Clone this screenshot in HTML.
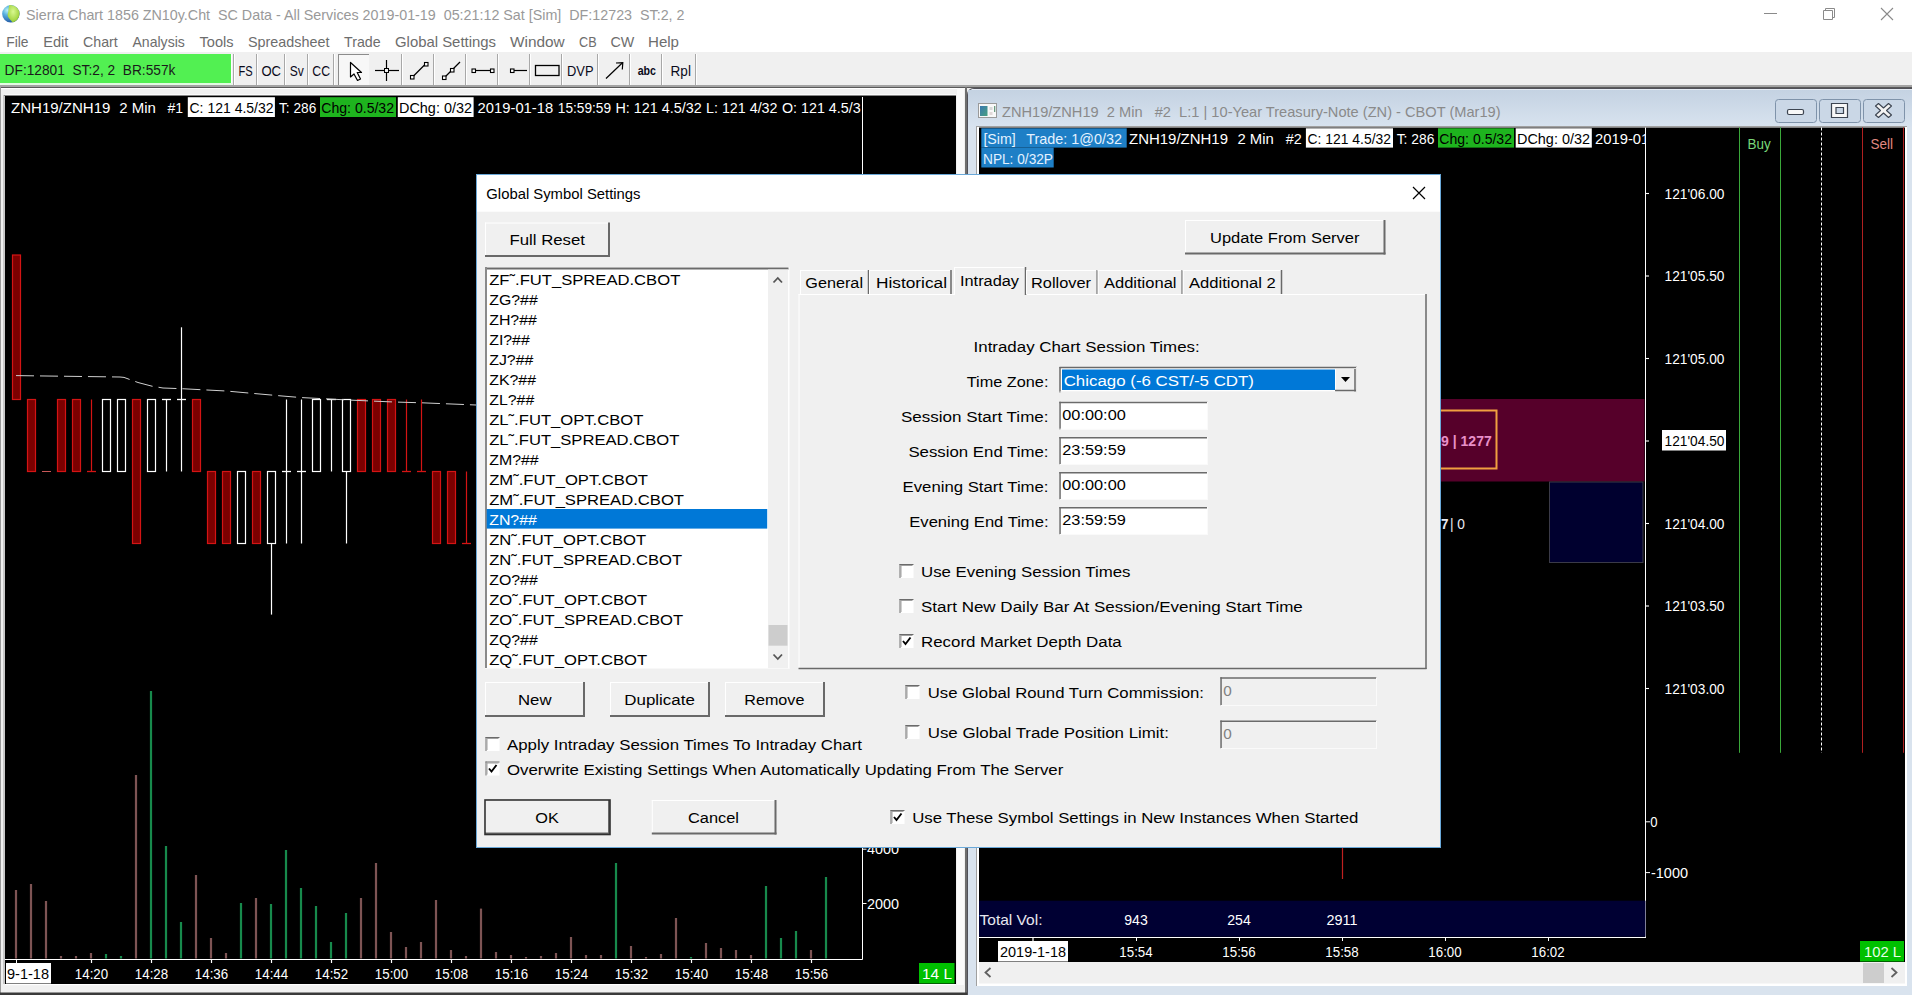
<!DOCTYPE html>
<html><head><meta charset="utf-8"><title>Sierra Chart</title>
<style>html,body{margin:0;padding:0;width:1912px;height:995px;overflow:hidden;background:#f0f0f0}
svg{display:block;font-family:"Liberation Sans",sans-serif} text{white-space:pre}</style></head>
<body><svg width="1912" height="995" viewBox="0 0 1912 995">
<rect x="0" y="0" width="1912" height="995" fill="#f0f0f0" />
<rect x="0" y="0" width="1912" height="52" fill="#ffffff" />
<defs><radialGradient id="gl" cx="0.4" cy="0.35" r="0.7"><stop offset="0" stop-color="#d8f070"/><stop offset="0.45" stop-color="#78b830"/><stop offset="1" stop-color="#1a5a9a"/></radialGradient><linearGradient id="tb" x1="0" y1="0" x2="0" y2="1"><stop offset="0" stop-color="#c4d2e2"/><stop offset="1" stop-color="#d8e3ef"/></linearGradient></defs>
<defs><radialGradient id="gb" cx="0.3" cy="0.3" r="0.8"><stop offset="0" stop-color="#b8f0f4"/><stop offset="0.35" stop-color="#58b0e0"/><stop offset="1" stop-color="#1a4a9a"/></radialGradient><radialGradient id="gg" cx="0.45" cy="0.35" r="0.75"><stop offset="0" stop-color="#d8f890"/><stop offset="0.6" stop-color="#a8d848"/><stop offset="1" stop-color="#5a9a20"/></radialGradient><clipPath id="gc"><circle cx="10.85" cy="13.8" r="8.7"/></clipPath></defs>
<circle cx="10.85" cy="13.8" r="8.7" fill="url(#gb)"/>
<g clip-path="url(#gc)"><path d="M9 5 Q16 4.5 20 10 L20 24 L13 24 Q12 21 10 19.5 Q7.5 17.5 7.5 14.5 Q8.5 12 8.5 9.5 Q9 7 9 5 Z" fill="url(#gg)"/></g>
<text x="26" y="20" font-size="14.5" fill="#999999" textLength="658.5" lengthAdjust="spacingAndGlyphs" >Sierra Chart 1856 ZN10y.Cht  SC Data - All Services 2019-01-19  05:21:12 Sat [Sim]  DF:12723  ST:2, 2</text>
<line x1="1764" y1="13.5" x2="1777" y2="13.5" stroke="#8a8a8a" stroke-width="1" />
<path d="M1823.5 10.5 h9 v9 h-9 z M1825.5 10.5 v-2 h9 v9 h-2" fill="none" stroke="#8a8a8a" stroke-width="1"/>
<path d="M1881 8 L1893 20 M1893 8 L1881 20" stroke="#8a8a8a" stroke-width="1.1"/>
<text x="6.2" y="46.7" font-size="15" fill="#6d6d6d" textLength="22.3" lengthAdjust="spacingAndGlyphs" >File</text>
<text x="43.2" y="46.7" font-size="15" fill="#6d6d6d" textLength="25.2" lengthAdjust="spacingAndGlyphs" >Edit</text>
<text x="83.1" y="46.7" font-size="15" fill="#6d6d6d" textLength="34.7" lengthAdjust="spacingAndGlyphs" >Chart</text>
<text x="132.5" y="46.7" font-size="15" fill="#6d6d6d" textLength="52.3" lengthAdjust="spacingAndGlyphs" >Analysis</text>
<text x="199.5" y="46.7" font-size="15" fill="#6d6d6d" textLength="34.0" lengthAdjust="spacingAndGlyphs" >Tools</text>
<text x="248" y="46.7" font-size="15" fill="#6d6d6d" textLength="81.4" lengthAdjust="spacingAndGlyphs" >Spreadsheet</text>
<text x="344" y="46.7" font-size="15" fill="#6d6d6d" textLength="36.6" lengthAdjust="spacingAndGlyphs" >Trade</text>
<text x="395" y="46.7" font-size="15" fill="#6d6d6d" textLength="101" lengthAdjust="spacingAndGlyphs" >Global Settings</text>
<text x="510" y="46.7" font-size="15" fill="#6d6d6d" textLength="54.7" lengthAdjust="spacingAndGlyphs" >Window</text>
<text x="579" y="46.7" font-size="15" fill="#6d6d6d" textLength="17.6" lengthAdjust="spacingAndGlyphs" >CB</text>
<text x="610.5" y="46.7" font-size="15" fill="#6d6d6d" textLength="23.8" lengthAdjust="spacingAndGlyphs" >CW</text>
<text x="648" y="46.7" font-size="15" fill="#6d6d6d" textLength="31" lengthAdjust="spacingAndGlyphs" >Help</text>
<rect x="0" y="54" width="231" height="29" fill="#52f052" />
<line x1="231.5" y1="54" x2="231.5" y2="84" stroke="#ffffff" stroke-width="1" />
<rect x="0" y="83" width="232" height="1" fill="#ffffff" />
<text x="4.6" y="75.3" font-size="15" fill="#1a1a1a" textLength="170.8" lengthAdjust="spacingAndGlyphs" >DF:12801  ST:2, 2  BR:557k</text>
<line x1="233.5" y1="54" x2="233.5" y2="85" stroke="#a8a8a8" stroke-width="1" />
<line x1="234.5" y1="54" x2="234.5" y2="85" stroke="#ffffff" stroke-width="1" />
<line x1="256.5" y1="54" x2="256.5" y2="85" stroke="#a8a8a8" stroke-width="1" />
<line x1="257.5" y1="54" x2="257.5" y2="85" stroke="#ffffff" stroke-width="1" />
<line x1="284.5" y1="54" x2="284.5" y2="85" stroke="#a8a8a8" stroke-width="1" />
<line x1="285.5" y1="54" x2="285.5" y2="85" stroke="#ffffff" stroke-width="1" />
<line x1="307.5" y1="54" x2="307.5" y2="85" stroke="#a8a8a8" stroke-width="1" />
<line x1="308.5" y1="54" x2="308.5" y2="85" stroke="#ffffff" stroke-width="1" />
<line x1="333.5" y1="54" x2="333.5" y2="85" stroke="#a8a8a8" stroke-width="1" />
<line x1="334.5" y1="54" x2="334.5" y2="85" stroke="#ffffff" stroke-width="1" />
<line x1="401.5" y1="54" x2="401.5" y2="85" stroke="#a8a8a8" stroke-width="1" />
<line x1="402.5" y1="54" x2="402.5" y2="85" stroke="#ffffff" stroke-width="1" />
<line x1="433.5" y1="54" x2="433.5" y2="85" stroke="#a8a8a8" stroke-width="1" />
<line x1="434.5" y1="54" x2="434.5" y2="85" stroke="#ffffff" stroke-width="1" />
<line x1="465.5" y1="54" x2="465.5" y2="85" stroke="#a8a8a8" stroke-width="1" />
<line x1="466.5" y1="54" x2="466.5" y2="85" stroke="#ffffff" stroke-width="1" />
<line x1="497.5" y1="54" x2="497.5" y2="85" stroke="#a8a8a8" stroke-width="1" />
<line x1="498.5" y1="54" x2="498.5" y2="85" stroke="#ffffff" stroke-width="1" />
<line x1="529.5" y1="54" x2="529.5" y2="85" stroke="#a8a8a8" stroke-width="1" />
<line x1="530.5" y1="54" x2="530.5" y2="85" stroke="#ffffff" stroke-width="1" />
<line x1="561.5" y1="54" x2="561.5" y2="85" stroke="#a8a8a8" stroke-width="1" />
<line x1="562.5" y1="54" x2="562.5" y2="85" stroke="#ffffff" stroke-width="1" />
<line x1="597.5" y1="54" x2="597.5" y2="85" stroke="#a8a8a8" stroke-width="1" />
<line x1="598.5" y1="54" x2="598.5" y2="85" stroke="#ffffff" stroke-width="1" />
<line x1="629.5" y1="54" x2="629.5" y2="85" stroke="#a8a8a8" stroke-width="1" />
<line x1="630.5" y1="54" x2="630.5" y2="85" stroke="#ffffff" stroke-width="1" />
<line x1="661.5" y1="54" x2="661.5" y2="85" stroke="#a8a8a8" stroke-width="1" />
<line x1="662.5" y1="54" x2="662.5" y2="85" stroke="#ffffff" stroke-width="1" />
<line x1="695.5" y1="54" x2="695.5" y2="85" stroke="#a8a8a8" stroke-width="1" />
<line x1="696.5" y1="54" x2="696.5" y2="85" stroke="#ffffff" stroke-width="1" />
<rect x="338" y="54" width="31" height="32" fill="#f7f7f7" />
<line x1="338.5" y1="54" x2="338.5" y2="86" stroke="#8c8c8c" stroke-width="1" />
<line x1="338" y1="54.5" x2="369" y2="54.5" stroke="#8c8c8c" stroke-width="1" />
<text x="238.5" y="75.7" font-size="15" fill="#0a0a1a" textLength="14.2" lengthAdjust="spacingAndGlyphs" >FS</text>
<text x="261.4" y="75.7" font-size="15" fill="#0a0a1a" textLength="19.6" lengthAdjust="spacingAndGlyphs" >OC</text>
<text x="289.7" y="75.7" font-size="15" fill="#0a0a1a" textLength="14.1" lengthAdjust="spacingAndGlyphs" >Sv</text>
<text x="312.3" y="75.7" font-size="15" fill="#0a0a1a" textLength="17.7" lengthAdjust="spacingAndGlyphs" >CC</text>
<path d="M350.5 62.5 L350.5 77 L354 74 L357.5 80.5 L360.5 79 L357.2 72.5 L361.5 72.5 Z" fill="#fff" stroke="#000" stroke-width="1.2" stroke-linejoin="round"/>
<line x1="375" y1="70.5" x2="384" y2="70.5" stroke="#000" stroke-width="1.2" />
<line x1="389" y1="70.5" x2="399" y2="70.5" stroke="#000" stroke-width="1.2" />
<line x1="386.5" y1="60" x2="386.5" y2="68" stroke="#000" stroke-width="1.2" />
<line x1="386.5" y1="73" x2="386.5" y2="81" stroke="#000" stroke-width="1.2" />
<rect x="384.5" y="68.5" width="4" height="4" fill="none" stroke="#000" stroke-width="1" />
<line x1="413" y1="76.5" x2="425" y2="64.5" stroke="#000" stroke-width="1.2" />
<rect x="410.5" y="75.5" width="3.5" height="3.5" fill="#fff" stroke="#000" stroke-width="1.1" />
<rect x="424.5" y="62.5" width="3.5" height="3.5" fill="#fff" stroke="#000" stroke-width="1.1" />
<line x1="445" y1="77" x2="460" y2="62" stroke="#000" stroke-width="1.2" />
<rect x="442.5" y="76" width="3.5" height="3.5" fill="#fff" stroke="#000" stroke-width="1.1" />
<rect x="450.5" y="68.5" width="3.5" height="3.5" fill="#fff" stroke="#000" stroke-width="1.1" />
<line x1="475" y1="70.5" x2="491" y2="70.5" stroke="#000" stroke-width="1.2" />
<rect x="472" y="69" width="3.5" height="3.5" fill="#fff" stroke="#000" stroke-width="1.1" />
<rect x="490.5" y="69" width="3.5" height="3.5" fill="#fff" stroke="#000" stroke-width="1.1" />
<line x1="514" y1="70.5" x2="527" y2="70.5" stroke="#000" stroke-width="1.2" />
<rect x="510.5" y="69" width="3.5" height="3.5" fill="#fff" stroke="#000" stroke-width="1.1" />
<rect x="535.5" y="65.5" width="23.5" height="10" fill="none" stroke="#000" stroke-width="1.3" />
<text x="567" y="75.7" font-size="15" fill="#0a0a1a" textLength="26.5" lengthAdjust="spacingAndGlyphs" >DVP</text>
<line x1="606" y1="78.5" x2="622.5" y2="62.8" stroke="#000" stroke-width="1.2" />
<path d="M616 63 L622.8 62.6 L622.3 69.5" fill="none" stroke="#000" stroke-width="1.2"/>
<text x="637.7" y="75.3" font-size="13" fill="#0a0a1a" textLength="18.3" lengthAdjust="spacingAndGlyphs" font-weight="bold" >abc</text>
<text x="670.6" y="75.7" font-size="15" fill="#0a0a1a" textLength="20.3" lengthAdjust="spacingAndGlyphs" >Rpl</text>
<rect x="0" y="83" width="232" height="2" fill="#e4fbe4" />
<rect x="0" y="85" width="1912" height="2" fill="#a4a4a4" />
<rect x="0" y="87" width="1912" height="908" fill="#f0f0f0" />
<rect x="0" y="87" width="1912" height="1" fill="#5a5a5a" />
<rect x="0" y="88" width="966" height="1" fill="#ffffff" />
<line x1="0.5" y1="87" x2="0.5" y2="995" stroke="#9a9a9a" stroke-width="1" />
<line x1="4" y1="95" x2="4" y2="984" stroke="#a0a0a0" stroke-width="1" />
<rect x="5" y="94" width="951" height="1" fill="#fafafa" />
<rect x="4" y="95" width="952" height="1" fill="#858585" />
<rect x="957" y="88" width="7" height="897" fill="#fafafa" />
<rect x="5" y="96" width="951" height="888" fill="#000000" />
<rect x="965" y="87" width="2" height="908" fill="#6e6e6e" />
<rect x="0" y="992.5" width="1912" height="2.5" fill="#3a3a3a" />
<text x="11" y="112.7" font-size="15" fill="#fff" textLength="99.4" lengthAdjust="spacingAndGlyphs" >ZNH19/ZNH19</text>
<text x="119.2" y="112.7" font-size="15" fill="#fff" textLength="36.7" lengthAdjust="spacingAndGlyphs" >2 Min</text>
<text x="167.4" y="112.7" font-size="15" fill="#fff" textLength="15.6" lengthAdjust="spacingAndGlyphs" >#1</text>
<rect x="187.8" y="97.2" width="87.1" height="19.8" fill="#ffffff" />
<text x="189.5" y="112.7" font-size="15" fill="#000" textLength="84.1" lengthAdjust="spacingAndGlyphs" >C: 121 4.5/32</text>
<text x="279" y="112.7" font-size="15" fill="#fff" textLength="37.3" lengthAdjust="spacingAndGlyphs" >T: 286</text>
<rect x="320" y="97.2" width="76" height="19.8" fill="#1eb41e" />
<text x="321.3" y="112.7" font-size="15" fill="#000" textLength="72.7" lengthAdjust="spacingAndGlyphs" >Chg: 0.5/32</text>
<rect x="397.8" y="97.2" width="75.8" height="19.8" fill="#ffffff" />
<text x="399" y="112.7" font-size="15" fill="#000" textLength="73" lengthAdjust="spacingAndGlyphs" >DChg: 0/32</text>
<clipPath id="lclip"><rect x="5" y="96" width="856" height="30"/></clipPath>
<g clip-path="url(#lclip)">
<text x="477.6" y="112.7" font-size="15" fill="#fff" textLength="75.6" lengthAdjust="spacingAndGlyphs" >2019-01-18</text>
<text x="557.8" y="112.7" font-size="15" fill="#fff" textLength="53.2" lengthAdjust="spacingAndGlyphs" >15:59:59</text>
<text x="615.5" y="112.7" font-size="15" fill="#fff" textLength="86.2" lengthAdjust="spacingAndGlyphs" >H: 121 4.5/32</text>
<text x="706" y="112.7" font-size="15" fill="#fff" textLength="71.5" lengthAdjust="spacingAndGlyphs" >L: 121 4/32</text>
<text x="782" y="112.7" font-size="15" fill="#fff" textLength="86.6" lengthAdjust="spacingAndGlyphs" >O: 121 4.5/32</text>
</g>
<line x1="862.5" y1="97" x2="862.5" y2="959.5" stroke="#ffffff" stroke-width="1" />
<rect x="12.5" y="255" width="8" height="144.5" fill="#7c0000" stroke="#d41414" stroke-width="1.2" />
<rect x="27.5" y="399.5" width="8" height="72.0" fill="#7c0000" stroke="#d41414" stroke-width="1.2" />
<line x1="42.0" y1="471.5" x2="51.0" y2="471.5" stroke="#c85858" stroke-width="1" />
<rect x="57.5" y="399.5" width="8" height="72.0" fill="#7c0000" stroke="#d41414" stroke-width="1.2" />
<rect x="72.5" y="399.5" width="8" height="72.0" fill="#7c0000" stroke="#d41414" stroke-width="1.2" />
<line x1="91.5" y1="399.5" x2="91.5" y2="471.5" stroke="#d41414" stroke-width="1.2" />
<line x1="87.0" y1="471.5" x2="96.0" y2="471.5" stroke="#d41414" stroke-width="1.3" />
<rect x="102.5" y="399.5" width="8" height="72.0" fill="#000" stroke="#fff" stroke-width="1.2" />
<rect x="117.5" y="399.5" width="8" height="72.0" fill="#000" stroke="#fff" stroke-width="1.2" />
<rect x="132.5" y="399.5" width="8" height="144.0" fill="#7c0000" stroke="#d41414" stroke-width="1.2" />
<rect x="147.5" y="399.5" width="8" height="72.0" fill="#000" stroke="#fff" stroke-width="1.2" />
<line x1="166.5" y1="399.5" x2="166.5" y2="471.5" stroke="#fff" stroke-width="1.2" />
<line x1="162.0" y1="399.5" x2="171.0" y2="399.5" stroke="#fff" stroke-width="1.3" />
<line x1="181.5" y1="327.3" x2="181.5" y2="471.5" stroke="#fff" stroke-width="1.2" />
<line x1="177.0" y1="399.5" x2="186.0" y2="399.5" stroke="#fff" stroke-width="1.3" />
<rect x="192.5" y="399.5" width="8" height="72.0" fill="#7c0000" stroke="#d41414" stroke-width="1.2" />
<rect x="207.5" y="471.5" width="8" height="72.0" fill="#7c0000" stroke="#d41414" stroke-width="1.2" />
<rect x="222.5" y="471.5" width="8" height="72.0" fill="#7c0000" stroke="#d41414" stroke-width="1.2" />
<rect x="237.5" y="471.5" width="8" height="72.0" fill="#000" stroke="#fff" stroke-width="1.2" />
<rect x="252.5" y="471.5" width="8" height="72.0" fill="#7c0000" stroke="#d41414" stroke-width="1.2" />
<line x1="271.5" y1="543.5" x2="271.5" y2="614.6" stroke="#fff" stroke-width="1.2" />
<rect x="267.5" y="471.5" width="8" height="72.0" fill="#000" stroke="#fff" stroke-width="1.2" />
<line x1="286.5" y1="399.5" x2="286.5" y2="543.5" stroke="#fff" stroke-width="1.2" />
<line x1="282.0" y1="471.5" x2="291.0" y2="471.5" stroke="#fff" stroke-width="1.3" />
<line x1="301.5" y1="399.5" x2="301.5" y2="543.5" stroke="#fff" stroke-width="1.2" />
<line x1="297.0" y1="471.5" x2="306.0" y2="471.5" stroke="#fff" stroke-width="1.3" />
<rect x="312.5" y="399.5" width="8" height="72.0" fill="#000" stroke="#fff" stroke-width="1.2" />
<line x1="331.5" y1="399.5" x2="331.5" y2="471.5" stroke="#fff" stroke-width="1.2" />
<line x1="327.0" y1="399.5" x2="336.0" y2="399.5" stroke="#fff" stroke-width="1.3" />
<line x1="346.5" y1="471.5" x2="346.5" y2="543.5" stroke="#fff" stroke-width="1.2" />
<rect x="342.5" y="399.5" width="8" height="72.0" fill="#000" stroke="#fff" stroke-width="1.2" />
<rect x="357.5" y="399.5" width="8" height="72.0" fill="#7c0000" stroke="#d41414" stroke-width="1.2" />
<rect x="372.5" y="399.5" width="8" height="72.0" fill="#7c0000" stroke="#d41414" stroke-width="1.2" />
<rect x="387.5" y="399.5" width="8" height="72.0" fill="#7c0000" stroke="#d41414" stroke-width="1.2" />
<line x1="406.5" y1="399.5" x2="406.5" y2="471.5" stroke="#d41414" stroke-width="1.2" />
<line x1="402.0" y1="471.5" x2="411.0" y2="471.5" stroke="#d41414" stroke-width="1.3" />
<line x1="421.5" y1="399.5" x2="421.5" y2="471.5" stroke="#d41414" stroke-width="1.2" />
<line x1="417.0" y1="471.5" x2="426.0" y2="471.5" stroke="#d41414" stroke-width="1.3" />
<rect x="432.5" y="471.5" width="8" height="72.0" fill="#7c0000" stroke="#d41414" stroke-width="1.2" />
<rect x="447.5" y="471.5" width="8" height="72.0" fill="#7c0000" stroke="#d41414" stroke-width="1.2" />
<line x1="466.5" y1="471.5" x2="466.5" y2="543.5" stroke="#d41414" stroke-width="1.2" />
<line x1="462.0" y1="543.5" x2="471.0" y2="543.5" stroke="#d41414" stroke-width="1.3" />
<polyline points="16,375.6 120,377 124,377.4 138,382.5 152,386.2 163,388 184,388.8 226,391 281,395.9 300,397.5 352,400.2 394,402 422,402.8 476,405" fill="none" stroke="#d0d0d0" stroke-width="1" stroke-dasharray="18 6"/>
<rect x="14.9" y="890" width="2.2" height="68.5" fill="#7e5454" />
<rect x="29.9" y="884" width="2.2" height="74.5" fill="#7e5454" />
<rect x="44.9" y="901" width="2.2" height="57.5" fill="#7e5454" />
<rect x="59.9" y="956" width="2.2" height="2.5" fill="#7e5454" />
<rect x="74.9" y="956" width="2.2" height="2.5" fill="#7e5454" />
<rect x="89.9" y="953" width="2.2" height="5.5" fill="#7e5454" />
<rect x="104.9" y="954" width="2.2" height="4.5" fill="#178a4c" />
<rect x="119.9" y="956" width="2.2" height="2.5" fill="#178a4c" />
<rect x="134.9" y="775" width="2.2" height="183.5" fill="#7e5454" />
<rect x="149.9" y="691" width="2.2" height="267.5" fill="#178a4c" />
<rect x="164.9" y="846" width="2.2" height="112.5" fill="#178a4c" />
<rect x="179.9" y="922" width="2.2" height="36.5" fill="#178a4c" />
<rect x="194.9" y="875" width="2.2" height="83.5" fill="#7e5454" />
<rect x="209.9" y="938" width="2.2" height="20.5" fill="#7e5454" />
<rect x="224.9" y="953" width="2.2" height="5.5" fill="#7e5454" />
<rect x="239.9" y="903" width="2.2" height="55.5" fill="#178a4c" />
<rect x="254.9" y="898" width="2.2" height="60.5" fill="#7e5454" />
<rect x="269.9" y="904" width="2.2" height="54.5" fill="#178a4c" />
<rect x="284.9" y="850" width="2.2" height="108.5" fill="#178a4c" />
<rect x="299.9" y="888" width="2.2" height="70.5" fill="#178a4c" />
<rect x="314.9" y="906" width="2.2" height="52.5" fill="#178a4c" />
<rect x="329.9" y="942" width="2.2" height="16.5" fill="#178a4c" />
<rect x="344.9" y="913" width="2.2" height="45.5" fill="#178a4c" />
<rect x="359.9" y="898" width="2.2" height="60.5" fill="#7e5454" />
<rect x="374.9" y="863" width="2.2" height="95.5" fill="#7e5454" />
<rect x="389.9" y="932" width="2.2" height="26.5" fill="#7e5454" />
<rect x="404.9" y="947" width="2.2" height="11.5" fill="#7e5454" />
<rect x="419.9" y="942" width="2.2" height="16.5" fill="#7e5454" />
<rect x="434.9" y="900" width="2.2" height="58.5" fill="#7e5454" />
<rect x="449.9" y="950" width="2.2" height="8.5" fill="#7e5454" />
<rect x="464.9" y="956" width="2.2" height="2.5" fill="#7e5454" />
<rect x="479.9" y="908.6" width="2.2" height="49.89999999999998" fill="#7e5454" />
<rect x="494.9" y="952" width="2.2" height="6.5" fill="#7e5454" />
<rect x="509.9" y="955" width="2.2" height="3.5" fill="#7e5454" />
<rect x="524.9" y="957" width="2.2" height="1.5" fill="#7e5454" />
<rect x="539.9" y="956" width="2.2" height="2.5" fill="#7e5454" />
<rect x="554.9" y="953" width="2.2" height="5.5" fill="#7e5454" />
<rect x="569.9" y="937" width="2.2" height="21.5" fill="#7e5454" />
<rect x="584.9" y="955" width="2.2" height="3.5" fill="#7e5454" />
<rect x="599.9" y="955" width="2.2" height="3.5" fill="#7e5454" />
<rect x="614.9" y="863" width="2.2" height="95.5" fill="#178a4c" />
<rect x="629.9" y="946" width="2.2" height="12.5" fill="#7e5454" />
<rect x="644.9" y="957" width="2.2" height="1.5" fill="#7e5454" />
<rect x="659.9" y="954" width="2.2" height="4.5" fill="#7e5454" />
<rect x="674.9" y="918" width="2.2" height="40.5" fill="#7e5454" />
<rect x="689.9" y="957" width="2.2" height="1.5" fill="#178a4c" />
<rect x="704.9" y="943" width="2.2" height="15.5" fill="#7e5454" />
<rect x="719.9" y="948" width="2.2" height="10.5" fill="#7e5454" />
<rect x="734.9" y="950" width="2.2" height="8.5" fill="#7e5454" />
<rect x="749.9" y="955" width="2.2" height="3.5" fill="#7e5454" />
<rect x="764.9" y="886" width="2.2" height="72.5" fill="#178a4c" />
<rect x="779.9" y="938" width="2.2" height="20.5" fill="#178a4c" />
<rect x="794.9" y="931" width="2.2" height="27.5" fill="#178a4c" />
<rect x="809.9" y="950" width="2.2" height="8.5" fill="#7e5454" />
<rect x="824.9" y="877" width="2.2" height="81.5" fill="#178a4c" />
<line x1="5" y1="959.5" x2="862.5" y2="959.5" stroke="#ffffff" stroke-width="1.2" />
<line x1="16.5" y1="959" x2="16.5" y2="963" stroke="#fff" stroke-width="1" />
<line x1="91.5" y1="959" x2="91.5" y2="963" stroke="#fff" stroke-width="1.2" />
<text x="91.5" y="978.9" font-size="15" fill="#fff" textLength="33.3" lengthAdjust="spacingAndGlyphs" text-anchor="middle" >14:20</text>
<line x1="151.5" y1="959" x2="151.5" y2="963" stroke="#fff" stroke-width="1.2" />
<text x="151.5" y="978.9" font-size="15" fill="#fff" textLength="33.3" lengthAdjust="spacingAndGlyphs" text-anchor="middle" >14:28</text>
<line x1="211.5" y1="959" x2="211.5" y2="963" stroke="#fff" stroke-width="1.2" />
<text x="211.5" y="978.9" font-size="15" fill="#fff" textLength="33.3" lengthAdjust="spacingAndGlyphs" text-anchor="middle" >14:36</text>
<line x1="271.5" y1="959" x2="271.5" y2="963" stroke="#fff" stroke-width="1.2" />
<text x="271.5" y="978.9" font-size="15" fill="#fff" textLength="33.3" lengthAdjust="spacingAndGlyphs" text-anchor="middle" >14:44</text>
<line x1="331.5" y1="959" x2="331.5" y2="963" stroke="#fff" stroke-width="1.2" />
<text x="331.5" y="978.9" font-size="15" fill="#fff" textLength="33.3" lengthAdjust="spacingAndGlyphs" text-anchor="middle" >14:52</text>
<line x1="391.5" y1="959" x2="391.5" y2="963" stroke="#fff" stroke-width="1.2" />
<text x="391.5" y="978.9" font-size="15" fill="#fff" textLength="33.3" lengthAdjust="spacingAndGlyphs" text-anchor="middle" >15:00</text>
<line x1="451.5" y1="959" x2="451.5" y2="963" stroke="#fff" stroke-width="1.2" />
<text x="451.5" y="978.9" font-size="15" fill="#fff" textLength="33.3" lengthAdjust="spacingAndGlyphs" text-anchor="middle" >15:08</text>
<line x1="511.5" y1="959" x2="511.5" y2="963" stroke="#fff" stroke-width="1.2" />
<text x="511.5" y="978.9" font-size="15" fill="#fff" textLength="33.3" lengthAdjust="spacingAndGlyphs" text-anchor="middle" >15:16</text>
<line x1="571.5" y1="959" x2="571.5" y2="963" stroke="#fff" stroke-width="1.2" />
<text x="571.5" y="978.9" font-size="15" fill="#fff" textLength="33.3" lengthAdjust="spacingAndGlyphs" text-anchor="middle" >15:24</text>
<line x1="631.5" y1="959" x2="631.5" y2="963" stroke="#fff" stroke-width="1.2" />
<text x="631.5" y="978.9" font-size="15" fill="#fff" textLength="33.3" lengthAdjust="spacingAndGlyphs" text-anchor="middle" >15:32</text>
<line x1="691.5" y1="959" x2="691.5" y2="963" stroke="#fff" stroke-width="1.2" />
<text x="691.5" y="978.9" font-size="15" fill="#fff" textLength="33.3" lengthAdjust="spacingAndGlyphs" text-anchor="middle" >15:40</text>
<line x1="751.5" y1="959" x2="751.5" y2="963" stroke="#fff" stroke-width="1.2" />
<text x="751.5" y="978.9" font-size="15" fill="#fff" textLength="33.3" lengthAdjust="spacingAndGlyphs" text-anchor="middle" >15:48</text>
<line x1="811.5" y1="959" x2="811.5" y2="963" stroke="#fff" stroke-width="1.2" />
<text x="811.5" y="978.9" font-size="15" fill="#fff" textLength="33.3" lengthAdjust="spacingAndGlyphs" text-anchor="middle" >15:56</text>
<rect x="6" y="963" width="45" height="20.5" fill="#ffffff" />
<text x="7" y="978.9" font-size="15" fill="#000" textLength="42" lengthAdjust="spacingAndGlyphs" >9-1-18</text>
<line x1="862.5" y1="849.2" x2="866.5" y2="849.2" stroke="#fff" stroke-width="1" />
<line x1="862.5" y1="903.5" x2="866.5" y2="903.5" stroke="#fff" stroke-width="1" />
<text x="867" y="854.2" font-size="15" fill="#fff" textLength="32" lengthAdjust="spacingAndGlyphs" >4000</text>
<text x="867" y="909.2" font-size="15" fill="#fff" textLength="32" lengthAdjust="spacingAndGlyphs" >2000</text>
<rect x="919" y="963" width="35.5" height="20.5" fill="#00c000" />
<text x="922" y="978.9" font-size="15" fill="#fff" textLength="30" lengthAdjust="spacingAndGlyphs" >14 L</text>
<rect x="5" y="984" width="951" height="1.2" fill="#ffffff" />
<path d="M967.5 995 L967.5 95 Q967.5 88.5 974 88.5 L1912 88.5 L1912 995 Z" fill="#d9e3ee"/>
<path d="M967.5 995 L967.5 95 Q967.5 88.5 974 88.5 L1912 88.5" fill="none" stroke="#505058" stroke-width="1"/>
<rect x="968" y="90" width="944" height="37" fill="url(#tb)" />
<rect x="972" y="89" width="940" height="1" fill="#e4ebf3" />
<rect x="978.5" y="103.5" width="18" height="14" fill="#f8f8f8" stroke="#9a9a9a" stroke-width="1" />
<defs><linearGradient id="ic" x1="0" y1="0" x2="1" y2="1"><stop offset="0" stop-color="#3a78b0"/><stop offset="1" stop-color="#48a080"/></linearGradient></defs>
<rect x="980" y="106" width="7.5" height="10" fill="url(#ic)"/>
<rect x="994" y="106" width="1.3" height="6" fill="#6a9a80"/><rect x="989.5" y="107" width="3" height="3" fill="#d8d8d8"/><rect x="989.5" y="112" width="3" height="3" fill="#e0d8d8"/>
<text x="1002" y="117" font-size="15" fill="#8a8a8a" textLength="498.6" lengthAdjust="spacingAndGlyphs" >ZNH19/ZNH19  2 Min   #2  L:1 | 10-Year Treasury-Note (ZN) - CBOT (Mar19)</text>
<rect x="1775.5" y="99.5" width="41" height="23" fill="#cad7e6" stroke="#7f93aa" stroke-width="1" rx="3"/>
<rect x="1819.5" y="99.5" width="41" height="23" fill="#cad7e6" stroke="#7f93aa" stroke-width="1" rx="3"/>
<rect x="1863.5" y="99.5" width="41" height="23" fill="#cad7e6" stroke="#7f93aa" stroke-width="1" rx="3"/>
<rect x="1787.5" y="109.5" width="16" height="5" rx="1.5" fill="#f8f8f8" stroke="#3c4450" stroke-width="1.2"/>
<path d="M1831.5 103.5 h16 v14 h-16 z M1836 107.5 v6 h7.5 v-6 z" fill="#f8f8f8" fill-rule="evenodd" stroke="#3c4450" stroke-width="1.2"/>
<path d="M1875.5 106 L1878.5 103.5 L1883.5 108 L1888.5 103.5 L1891.5 106 L1886.5 110.5 L1891.5 115 L1888.5 117.5 L1883.5 113 L1878.5 117.5 L1875.5 115 L1880.5 110.5 Z" fill="#f4f4f4" stroke="#3c4450" stroke-width="1.1" stroke-linejoin="round"/>
<rect x="976" y="126" width="931" height="860" fill="#ffffff" />
<rect x="976" y="126" width="931" height="1" fill="#a0a0a0" />
<rect x="976" y="126" width="1" height="860" fill="#a0a0a0" />
<rect x="979" y="127.5" width="926" height="834.5" fill="#000000" />
<rect x="979" y="962" width="926" height="21.5" fill="#f0f0f0" />
<path d="M990.5 968 L985.5 972.5 L990.5 977" fill="none" stroke="#606060" stroke-width="1.8"/>
<rect x="1863" y="963" width="21" height="20" fill="#cdcdcd" />
<path d="M1891.5 968 L1896.5 972.5 L1891.5 977" fill="none" stroke="#606060" stroke-width="1.8"/>
<rect x="981.3" y="128.3" width="145.4" height="19.3" fill="#1e7fc6" />
<rect x="981.3" y="147.6" width="72.4" height="19.9" fill="#1e7fc6" />
<text x="983.4" y="143.8" font-size="15" fill="#e4f2ff" textLength="32.4" lengthAdjust="spacingAndGlyphs" >[Sim]</text>
<text x="1026.3" y="143.8" font-size="15" fill="#e4f2ff" textLength="95.7" lengthAdjust="spacingAndGlyphs" >Trade: 1@0/32</text>
<text x="983" y="163.8" font-size="15" fill="#e4f2ff" textLength="70" lengthAdjust="spacingAndGlyphs" >NPL: 0/32P</text>
<text x="1129" y="143.8" font-size="15" fill="#fff" textLength="99" lengthAdjust="spacingAndGlyphs" >ZNH19/ZNH19</text>
<text x="1237.4" y="143.8" font-size="15" fill="#fff" textLength="36.4" lengthAdjust="spacingAndGlyphs" >2 Min</text>
<text x="1285.8" y="143.8" font-size="15" fill="#fff" textLength="16" lengthAdjust="spacingAndGlyphs" >#2</text>
<rect x="1305.9" y="128.3" width="87.1" height="19.3" fill="#ffffff" />
<text x="1307.6" y="143.8" font-size="15" fill="#000" textLength="83.4" lengthAdjust="spacingAndGlyphs" >C: 121 4.5/32</text>
<text x="1396.7" y="143.8" font-size="15" fill="#fff" textLength="37.7" lengthAdjust="spacingAndGlyphs" >T: 286</text>
<rect x="1438" y="128.3" width="76" height="19.3" fill="#1eb41e" />
<text x="1439.3" y="143.8" font-size="15" fill="#000" textLength="72.7" lengthAdjust="spacingAndGlyphs" >Chg: 0.5/32</text>
<rect x="1515.7" y="128.3" width="76.1" height="19.3" fill="#ffffff" />
<text x="1517" y="143.8" font-size="15" fill="#000" textLength="73" lengthAdjust="spacingAndGlyphs" >DChg: 0/32</text>
<clipPath id="rclip"><rect x="979" y="127" width="666" height="40"/></clipPath>
<g clip-path="url(#rclip)">
<text x="1595" y="143.8" font-size="15" fill="#fff" textLength="75.6" lengthAdjust="spacingAndGlyphs" >2019-01-18</text>
</g>
<line x1="1645.5" y1="127.5" x2="1645.5" y2="937" stroke="#ffffff" stroke-width="1" />
<line x1="1739.5" y1="127.5" x2="1739.5" y2="752.8" stroke="#3aa83a" stroke-width="1" />
<line x1="1780.5" y1="127.5" x2="1780.5" y2="752.8" stroke="#3aa83a" stroke-width="1" />
<line x1="1821.5" y1="127.5" x2="1821.5" y2="752.8" stroke="#ffffff" stroke-width="1" stroke-dasharray="3 2"/>
<line x1="1862.5" y1="127.5" x2="1862.5" y2="752.8" stroke="#b02020" stroke-width="1" />
<line x1="1903.5" y1="127.5" x2="1903.5" y2="752.8" stroke="#b02020" stroke-width="1" />
<text x="1747.5" y="148.7" font-size="15" fill="#78d878" textLength="23.2" lengthAdjust="spacingAndGlyphs" >Buy</text>
<text x="1870.5" y="148.7" font-size="15" fill="#e08880" textLength="22.5" lengthAdjust="spacingAndGlyphs" >Sell</text>
<line x1="1645.5" y1="193.5" x2="1649" y2="193.5" stroke="#fff" stroke-width="1.1" />
<text x="1664.6" y="198.8" font-size="15" fill="#fff" textLength="59.9" lengthAdjust="spacingAndGlyphs" >121&#x27;06.00</text>
<line x1="1645.5" y1="276.0" x2="1649" y2="276.0" stroke="#fff" stroke-width="1.1" />
<text x="1664.6" y="281.3" font-size="15" fill="#fff" textLength="59.9" lengthAdjust="spacingAndGlyphs" >121&#x27;05.50</text>
<line x1="1645.5" y1="358.5" x2="1649" y2="358.5" stroke="#fff" stroke-width="1.1" />
<text x="1664.6" y="363.8" font-size="15" fill="#fff" textLength="59.9" lengthAdjust="spacingAndGlyphs" >121&#x27;05.00</text>
<line x1="1645.5" y1="441.0" x2="1649" y2="441.0" stroke="#fff" stroke-width="1.1" />
<rect x="1662" y="430" width="64" height="20.5" fill="#ffffff" />
<text x="1664.6" y="446.3" font-size="15" fill="#000" textLength="59.9" lengthAdjust="spacingAndGlyphs" >121&#x27;04.50</text>
<line x1="1645.5" y1="523.5" x2="1649" y2="523.5" stroke="#fff" stroke-width="1.1" />
<text x="1664.6" y="528.8" font-size="15" fill="#fff" textLength="59.9" lengthAdjust="spacingAndGlyphs" >121&#x27;04.00</text>
<line x1="1645.5" y1="606.0" x2="1649" y2="606.0" stroke="#fff" stroke-width="1.1" />
<text x="1664.6" y="611.3" font-size="15" fill="#fff" textLength="59.9" lengthAdjust="spacingAndGlyphs" >121&#x27;03.50</text>
<line x1="1645.5" y1="688.5" x2="1649" y2="688.5" stroke="#fff" stroke-width="1.1" />
<text x="1664.6" y="693.8" font-size="15" fill="#fff" textLength="59.9" lengthAdjust="spacingAndGlyphs" >121&#x27;03.00</text>
<rect x="1440" y="399" width="204.5" height="82.5" fill="#56002a" />
<rect x="1549.5" y="482" width="93.5" height="80.5" fill="#00002f" stroke="#3a3a48" stroke-width="1" />
<rect x="1430" y="410.5" width="66.5" height="58" fill="none" stroke="#f0a040" stroke-width="2" />
<text x="1441" y="446" font-size="14.5" fill="#e890c8" textLength="50.8" lengthAdjust="spacingAndGlyphs" font-weight="bold" >9 | 1277</text>
<text x="1441" y="528.7" font-size="14.5" fill="#e8e8f0" textLength="7.5" lengthAdjust="spacingAndGlyphs" font-weight="bold" >7</text>
<text x="1450" y="528.7" font-size="14.5" fill="#e8e8f0" textLength="15" lengthAdjust="spacingAndGlyphs" >| 0</text>
<line x1="1645.5" y1="821.8" x2="1650" y2="821.8" stroke="#fff" stroke-width="1" />
<text x="1650.3" y="826.7" font-size="14" fill="#fff" textLength="7.3" lengthAdjust="spacingAndGlyphs" >0</text>
<line x1="1645.5" y1="872.6" x2="1650" y2="872.6" stroke="#fff" stroke-width="1" />
<text x="1651" y="877.5" font-size="14" fill="#fff" textLength="37" lengthAdjust="spacingAndGlyphs" >-1000</text>
<line x1="1342.5" y1="847" x2="1342.5" y2="879" stroke="#c02020" stroke-width="1.2" />
<rect x="979" y="900.7" width="666.5" height="36" fill="#000033" />
<rect x="979" y="937" width="667" height="1" fill="#ffffff" />
<text x="979.5" y="925" font-size="15" fill="#e8e8f0" textLength="63" lengthAdjust="spacingAndGlyphs" >Total Vol:</text>
<text x="1136" y="925" font-size="15" fill="#fff" textLength="23.5" lengthAdjust="spacingAndGlyphs" text-anchor="middle" >943</text>
<text x="1239" y="925" font-size="15" fill="#fff" textLength="23.5" lengthAdjust="spacingAndGlyphs" text-anchor="middle" >254</text>
<text x="1342" y="925" font-size="15" fill="#fff" textLength="31" lengthAdjust="spacingAndGlyphs" text-anchor="middle" >2911</text>
<line x1="1136.5" y1="937" x2="1136.5" y2="941" stroke="#fff" stroke-width="1" />
<text x="1136" y="957" font-size="15" fill="#fff" textLength="33.3" lengthAdjust="spacingAndGlyphs" text-anchor="middle" >15:54</text>
<line x1="1239.5" y1="937" x2="1239.5" y2="941" stroke="#fff" stroke-width="1" />
<text x="1239" y="957" font-size="15" fill="#fff" textLength="33.3" lengthAdjust="spacingAndGlyphs" text-anchor="middle" >15:56</text>
<line x1="1342.5" y1="937" x2="1342.5" y2="941" stroke="#fff" stroke-width="1" />
<text x="1342" y="957" font-size="15" fill="#fff" textLength="33.3" lengthAdjust="spacingAndGlyphs" text-anchor="middle" >15:58</text>
<line x1="1445.5" y1="937" x2="1445.5" y2="941" stroke="#fff" stroke-width="1" />
<text x="1445" y="957" font-size="15" fill="#fff" textLength="33.3" lengthAdjust="spacingAndGlyphs" text-anchor="middle" >16:00</text>
<line x1="1548.5" y1="937" x2="1548.5" y2="941" stroke="#fff" stroke-width="1" />
<text x="1548" y="957" font-size="15" fill="#fff" textLength="33.3" lengthAdjust="spacingAndGlyphs" text-anchor="middle" >16:02</text>
<line x1="1033" y1="937" x2="1033" y2="941" stroke="#fff" stroke-width="1.2" />
<rect x="998" y="941" width="70" height="20.5" fill="#ffffff" />
<text x="1000" y="957" font-size="15" fill="#000" textLength="66" lengthAdjust="spacingAndGlyphs" >2019-1-18</text>
<rect x="1860" y="941" width="44" height="20.5" fill="#00c000" />
<text x="1864" y="957" font-size="15" fill="#e8ffe8" textLength="37" lengthAdjust="spacingAndGlyphs" >102 L</text>
<rect x="476" y="174" width="965" height="674" fill="#f0f0f0" />
<rect x="476.5" y="174.5" width="964" height="673" fill="none" stroke="#6aa8d8" stroke-width="1" />
<rect x="477" y="175" width="963" height="36.7" fill="#ffffff" />
<text x="486.3" y="199" font-size="15" fill="#000" textLength="154.2" lengthAdjust="spacingAndGlyphs" >Global Symbol Settings</text>
<path d="M1413 187 L1425 199 M1425 187 L1413 199" stroke="#000" stroke-width="1.2"/>
<rect x="485" y="222.5" width="125" height="34.5" fill="#f0f0f0" />
<line x1="485" y1="223.0" x2="610" y2="223.0" stroke="#ffffff" stroke-width="1" />
<line x1="485.5" y1="222.5" x2="485.5" y2="257" stroke="#ffffff" stroke-width="1" />
<line x1="485" y1="256" x2="610" y2="256" stroke="#696969" stroke-width="2" />
<line x1="609" y1="222.5" x2="609" y2="257" stroke="#696969" stroke-width="2" />
<text x="509.5" y="244.8" font-size="15.5" fill="#000" textLength="75.5" lengthAdjust="spacingAndGlyphs" >Full Reset</text>
<rect x="1185" y="220" width="200.5" height="34.5" fill="#f0f0f0" />
<line x1="1185" y1="220.5" x2="1385.5" y2="220.5" stroke="#ffffff" stroke-width="1" />
<line x1="1185.5" y1="220" x2="1185.5" y2="254.5" stroke="#ffffff" stroke-width="1" />
<line x1="1185" y1="253.5" x2="1385.5" y2="253.5" stroke="#696969" stroke-width="2" />
<line x1="1384.5" y1="220" x2="1384.5" y2="254.5" stroke="#696969" stroke-width="2" />
<text x="1210" y="243.3" font-size="15.5" fill="#000" textLength="149.5" lengthAdjust="spacingAndGlyphs" >Update From Server</text>
<rect x="485" y="267" width="304" height="402" fill="#ffffff" />
<line x1="485" y1="268.5" x2="789" y2="268.5" stroke="#6b6b6b" stroke-width="2" />
<line x1="486" y1="267" x2="486" y2="669" stroke="#8a8a8a" stroke-width="2" />
<line x1="485" y1="668.5" x2="789" y2="668.5" stroke="#f8f8f8" stroke-width="1" />
<line x1="789" y1="267" x2="789" y2="669" stroke="#fdfdfd" stroke-width="1" />
<rect x="768" y="269.5" width="20" height="398.5" fill="#f0f0f0" />
<path d="M773.5 282.5 L777.8 278 L782 282.5" fill="none" stroke="#555" stroke-width="1.8"/>
<path d="M773.5 654.5 L777.8 659 L782 654.5" fill="none" stroke="#555" stroke-width="1.8"/>
<rect x="768.5" y="625" width="19" height="20.7" fill="#cdcdcd" />
<text x="489.2" y="284.8" font-size="15.5" fill="#000" textLength="191.1" lengthAdjust="spacingAndGlyphs" >ZF˜.FUT_SPREAD.CBOT</text>
<text x="489.2" y="304.8" font-size="15.5" fill="#000" textLength="48.6" lengthAdjust="spacingAndGlyphs" >ZG?##</text>
<text x="489.2" y="324.8" font-size="15.5" fill="#000" textLength="47.7" lengthAdjust="spacingAndGlyphs" >ZH?##</text>
<text x="489.2" y="344.8" font-size="15.5" fill="#000" textLength="40.6" lengthAdjust="spacingAndGlyphs" >ZI?##</text>
<text x="489.2" y="364.8" font-size="15.5" fill="#000" textLength="44.2" lengthAdjust="spacingAndGlyphs" >ZJ?##</text>
<text x="489.2" y="384.8" font-size="15.5" fill="#000" textLength="46.8" lengthAdjust="spacingAndGlyphs" >ZK?##</text>
<text x="489.2" y="404.8" font-size="15.5" fill="#000" textLength="45.1" lengthAdjust="spacingAndGlyphs" >ZL?##</text>
<text x="489.2" y="424.8" font-size="15.5" fill="#000" textLength="154.2" lengthAdjust="spacingAndGlyphs" >ZL˜.FUT_OPT.CBOT</text>
<text x="489.2" y="444.8" font-size="15.5" fill="#000" textLength="190.2" lengthAdjust="spacingAndGlyphs" >ZL˜.FUT_SPREAD.CBOT</text>
<text x="489.2" y="464.8" font-size="15.5" fill="#000" textLength="49.5" lengthAdjust="spacingAndGlyphs" >ZM?##</text>
<text x="489.2" y="484.8" font-size="15.5" fill="#000" textLength="158.8" lengthAdjust="spacingAndGlyphs" >ZM˜.FUT_OPT.CBOT</text>
<text x="489.2" y="504.8" font-size="15.5" fill="#000" textLength="194.8" lengthAdjust="spacingAndGlyphs" >ZM˜.FUT_SPREAD.CBOT</text>
<rect x="486.7" y="509" width="280.5" height="19.6" fill="#0078d7" />
<text x="489.2" y="524.8" font-size="15.5" fill="#ffffff" textLength="47.7" lengthAdjust="spacingAndGlyphs" >ZN?##</text>
<text x="489.2" y="544.8" font-size="15.5" fill="#000" textLength="156.9" lengthAdjust="spacingAndGlyphs" >ZN˜.FUT_OPT.CBOT</text>
<text x="489.2" y="564.8" font-size="15.5" fill="#000" textLength="192.9" lengthAdjust="spacingAndGlyphs" >ZN˜.FUT_SPREAD.CBOT</text>
<text x="489.2" y="584.8" font-size="15.5" fill="#000" textLength="48.6" lengthAdjust="spacingAndGlyphs" >ZO?##</text>
<text x="489.2" y="604.8" font-size="15.5" fill="#000" textLength="157.9" lengthAdjust="spacingAndGlyphs" >ZO˜.FUT_OPT.CBOT</text>
<text x="489.2" y="624.8" font-size="15.5" fill="#000" textLength="193.9" lengthAdjust="spacingAndGlyphs" >ZO˜.FUT_SPREAD.CBOT</text>
<text x="489.2" y="644.8" font-size="15.5" fill="#000" textLength="48.6" lengthAdjust="spacingAndGlyphs" >ZQ?##</text>
<text x="489.2" y="664.8" font-size="15.5" fill="#000" textLength="157.9" lengthAdjust="spacingAndGlyphs" >ZQ˜.FUT_OPT.CBOT</text>
<rect x="798.5" y="294" width="627.5" height="374.5" fill="#f0f0f0" />
<line x1="798.5" y1="294.5" x2="1426" y2="294.5" stroke="#ffffff" stroke-width="1" />
<line x1="799" y1="294" x2="799" y2="668.5" stroke="#ffffff" stroke-width="1" />
<line x1="798.5" y1="668.5" x2="1426.5" y2="668.5" stroke="#696969" stroke-width="1.5" />
<line x1="1426" y1="294" x2="1426" y2="669" stroke="#696969" stroke-width="1.5" />
<rect x="800" y="270" width="69" height="24" fill="#f0f0f0" />
<line x1="800" y1="270.5" x2="869" y2="270.5" stroke="#ffffff" stroke-width="1" />
<line x1="800.5" y1="270" x2="800.5" y2="294" stroke="#ffffff" stroke-width="1" />
<line x1="868.5" y1="270" x2="868.5" y2="294" stroke="#696969" stroke-width="1.5" />
<text x="805.3" y="288" font-size="15.5" fill="#000" textLength="57.7" lengthAdjust="spacingAndGlyphs" >General</text>
<rect x="869" y="270" width="82.5" height="24" fill="#f0f0f0" />
<line x1="869" y1="270.5" x2="951.5" y2="270.5" stroke="#ffffff" stroke-width="1" />
<line x1="869.5" y1="270" x2="869.5" y2="294" stroke="#ffffff" stroke-width="1" />
<line x1="951.0" y1="270" x2="951.0" y2="294" stroke="#696969" stroke-width="1.5" />
<text x="876" y="288" font-size="15.5" fill="#000" textLength="71" lengthAdjust="spacingAndGlyphs" >Historical</text>
<rect x="954" y="267" width="72" height="28.5" fill="#f0f0f0" />
<line x1="954" y1="267.5" x2="1026" y2="267.5" stroke="#ffffff" stroke-width="1" />
<line x1="954.5" y1="267" x2="954.5" y2="295" stroke="#ffffff" stroke-width="1" />
<line x1="1025.5" y1="267" x2="1025.5" y2="295" stroke="#696969" stroke-width="1.5" />
<text x="960" y="286" font-size="15.5" fill="#000" textLength="59" lengthAdjust="spacingAndGlyphs" >Intraday</text>
<rect x="1026" y="270" width="71.70000000000005" height="24" fill="#f0f0f0" />
<line x1="1026" y1="270.5" x2="1097.7" y2="270.5" stroke="#ffffff" stroke-width="1" />
<line x1="1026.5" y1="270" x2="1026.5" y2="294" stroke="#ffffff" stroke-width="1" />
<line x1="1097.2" y1="270" x2="1097.2" y2="294" stroke="#696969" stroke-width="1.5" />
<text x="1031" y="288" font-size="15.5" fill="#000" textLength="60" lengthAdjust="spacingAndGlyphs" >Rollover</text>
<rect x="1097.7" y="270" width="85.0" height="24" fill="#f0f0f0" />
<line x1="1097.7" y1="270.5" x2="1182.7" y2="270.5" stroke="#ffffff" stroke-width="1" />
<line x1="1098.2" y1="270" x2="1098.2" y2="294" stroke="#ffffff" stroke-width="1" />
<line x1="1182.2" y1="270" x2="1182.2" y2="294" stroke="#696969" stroke-width="1.5" />
<text x="1104" y="288" font-size="15.5" fill="#000" textLength="72.5" lengthAdjust="spacingAndGlyphs" >Additional</text>
<rect x="1182.7" y="270" width="99.29999999999995" height="24" fill="#f0f0f0" />
<line x1="1182.7" y1="270.5" x2="1282" y2="270.5" stroke="#ffffff" stroke-width="1" />
<line x1="1183.2" y1="270" x2="1183.2" y2="294" stroke="#ffffff" stroke-width="1" />
<line x1="1281.5" y1="270" x2="1281.5" y2="294" stroke="#696969" stroke-width="1.5" />
<text x="1189" y="288" font-size="15.5" fill="#000" textLength="86.8" lengthAdjust="spacingAndGlyphs" >Additional 2</text>
<text x="973.6" y="352" font-size="15.5" fill="#000" textLength="226.1" lengthAdjust="spacingAndGlyphs" >Intraday Chart Session Times:</text>
<text x="966.8" y="386.8" font-size="15.5" fill="#000" textLength="81.6" lengthAdjust="spacingAndGlyphs" >Time Zone:</text>
<rect x="1059.5" y="367" width="297.5" height="25.5" fill="#ffffff" />
<line x1="1059.5" y1="367.5" x2="1357" y2="367.5" stroke="#696969" stroke-width="1.5" />
<line x1="1060" y1="367" x2="1060" y2="392.5" stroke="#696969" stroke-width="1.5" />
<line x1="1059.5" y1="392" x2="1357" y2="392" stroke="#e8e8e8" stroke-width="1" />
<line x1="1356.5" y1="367" x2="1356.5" y2="392.5" stroke="#e8e8e8" stroke-width="1" />
<rect x="1062" y="369.5" width="273" height="20.5" fill="#0078d7" />
<rect x="1335.5" y="369" width="20" height="22.5" fill="#f0f0f0" />
<line x1="1335.5" y1="369" x2="1335.5" y2="391.5" stroke="#ffffff" stroke-width="1" />
<line x1="1335" y1="390.5" x2="1356" y2="390.5" stroke="#696969" stroke-width="1.5" />
<line x1="1355" y1="369" x2="1355" y2="391.5" stroke="#696969" stroke-width="1.5" />
<path d="M1341 377 L1350 377 L1345.5 382 Z" fill="#000"/>
<text x="1063.7" y="386" font-size="15.5" fill="#ffffff" textLength="190.3" lengthAdjust="spacingAndGlyphs" >Chicago (-6 CST/-5 CDT)</text>
<text x="901" y="421.6" font-size="15.5" fill="#000" textLength="147.5" lengthAdjust="spacingAndGlyphs" >Session Start Time:</text>
<rect x="1059.3" y="401.7" width="148.70000000000005" height="28.0" fill="#ffffff" />
<line x1="1059.3" y1="402.45" x2="1208" y2="402.45" stroke="#6b6b6b" stroke-width="1.5" />
<line x1="1060.05" y1="401.7" x2="1060.05" y2="429.7" stroke="#6b6b6b" stroke-width="1.5" />
<line x1="1059.3" y1="429.2" x2="1208" y2="429.2" stroke="#fafafa" stroke-width="1" />
<line x1="1207.5" y1="401.7" x2="1207.5" y2="429.7" stroke="#fafafa" stroke-width="1" />
<text x="1062.3" y="420.0" font-size="15.5" fill="#000" textLength="63.5" lengthAdjust="spacingAndGlyphs" >00:00:00</text>
<text x="908.4" y="456.8" font-size="15.5" fill="#000" textLength="140.1" lengthAdjust="spacingAndGlyphs" >Session End Time:</text>
<rect x="1059.3" y="437" width="148.70000000000005" height="28" fill="#ffffff" />
<line x1="1059.3" y1="437.75" x2="1208" y2="437.75" stroke="#6b6b6b" stroke-width="1.5" />
<line x1="1060.05" y1="437" x2="1060.05" y2="465" stroke="#6b6b6b" stroke-width="1.5" />
<line x1="1059.3" y1="464.5" x2="1208" y2="464.5" stroke="#fafafa" stroke-width="1" />
<line x1="1207.5" y1="437" x2="1207.5" y2="465" stroke="#fafafa" stroke-width="1" />
<text x="1062.3" y="455.2" font-size="15.5" fill="#000" textLength="63.5" lengthAdjust="spacingAndGlyphs" >23:59:59</text>
<text x="902.6" y="492" font-size="15.5" fill="#000" textLength="145.9" lengthAdjust="spacingAndGlyphs" >Evening Start Time:</text>
<rect x="1059.3" y="472" width="148.70000000000005" height="28" fill="#ffffff" />
<line x1="1059.3" y1="472.75" x2="1208" y2="472.75" stroke="#6b6b6b" stroke-width="1.5" />
<line x1="1060.05" y1="472" x2="1060.05" y2="500" stroke="#6b6b6b" stroke-width="1.5" />
<line x1="1059.3" y1="499.5" x2="1208" y2="499.5" stroke="#fafafa" stroke-width="1" />
<line x1="1207.5" y1="472" x2="1207.5" y2="500" stroke="#fafafa" stroke-width="1" />
<text x="1062.3" y="490.4" font-size="15.5" fill="#000" textLength="63.5" lengthAdjust="spacingAndGlyphs" >00:00:00</text>
<text x="909.3" y="527" font-size="15.5" fill="#000" textLength="139.2" lengthAdjust="spacingAndGlyphs" >Evening End Time:</text>
<rect x="1059.3" y="507" width="148.70000000000005" height="28" fill="#ffffff" />
<line x1="1059.3" y1="507.75" x2="1208" y2="507.75" stroke="#6b6b6b" stroke-width="1.5" />
<line x1="1060.05" y1="507" x2="1060.05" y2="535" stroke="#6b6b6b" stroke-width="1.5" />
<line x1="1059.3" y1="534.5" x2="1208" y2="534.5" stroke="#fafafa" stroke-width="1" />
<line x1="1207.5" y1="507" x2="1207.5" y2="535" stroke="#fafafa" stroke-width="1" />
<text x="1062.3" y="525.4" font-size="15.5" fill="#000" textLength="63.5" lengthAdjust="spacingAndGlyphs" >23:59:59</text>
<rect x="899.5" y="564" width="14" height="14" fill="#ffffff" />
<line x1="899.5" y1="564.5" x2="913.5" y2="564.5" stroke="#6b6b6b" stroke-width="1" />
<line x1="900.0" y1="564" x2="900.0" y2="578" stroke="#6b6b6b" stroke-width="1" />
<line x1="900.5" y1="565.5" x2="912.5" y2="565.5" stroke="#a0a0a0" stroke-width="1" />
<line x1="901.0" y1="565" x2="901.0" y2="577" stroke="#a0a0a0" stroke-width="1" />
<text x="921" y="577" font-size="15.5" fill="#000" textLength="209.5" lengthAdjust="spacingAndGlyphs" >Use Evening Session Times</text>
<rect x="899.5" y="599" width="14" height="14" fill="#ffffff" />
<line x1="899.5" y1="599.5" x2="913.5" y2="599.5" stroke="#6b6b6b" stroke-width="1" />
<line x1="900.0" y1="599" x2="900.0" y2="613" stroke="#6b6b6b" stroke-width="1" />
<line x1="900.5" y1="600.5" x2="912.5" y2="600.5" stroke="#a0a0a0" stroke-width="1" />
<line x1="901.0" y1="600" x2="901.0" y2="612" stroke="#a0a0a0" stroke-width="1" />
<text x="921" y="612" font-size="15.5" fill="#000" textLength="381.8" lengthAdjust="spacingAndGlyphs" >Start New Daily Bar At Session/Evening Start Time</text>
<rect x="899.5" y="634" width="14" height="14" fill="#ffffff" />
<line x1="899.5" y1="634.5" x2="913.5" y2="634.5" stroke="#6b6b6b" stroke-width="1" />
<line x1="900.0" y1="634" x2="900.0" y2="648" stroke="#6b6b6b" stroke-width="1" />
<line x1="900.5" y1="635.5" x2="912.5" y2="635.5" stroke="#a0a0a0" stroke-width="1" />
<line x1="901.0" y1="635" x2="901.0" y2="647" stroke="#a0a0a0" stroke-width="1" />
<path d="M903.0 641 L905.5 644 L910.5 637.5" fill="none" stroke="#000" stroke-width="1.9"/>
<text x="921" y="647" font-size="15.5" fill="#000" textLength="200.7" lengthAdjust="spacingAndGlyphs" >Record Market Depth Data</text>
<rect x="905.5" y="685" width="14" height="14" fill="#ffffff" />
<line x1="905.5" y1="685.5" x2="919.5" y2="685.5" stroke="#6b6b6b" stroke-width="1" />
<line x1="906.0" y1="685" x2="906.0" y2="699" stroke="#6b6b6b" stroke-width="1" />
<line x1="906.5" y1="686.5" x2="918.5" y2="686.5" stroke="#a0a0a0" stroke-width="1" />
<line x1="907.0" y1="686" x2="907.0" y2="698" stroke="#a0a0a0" stroke-width="1" />
<text x="927.7" y="698" font-size="15.5" fill="#000" textLength="276.3" lengthAdjust="spacingAndGlyphs" >Use Global Round Turn Commission:</text>
<rect x="1220.3" y="677.3" width="156.70000000000005" height="28.700000000000045" fill="#f0f0f0" />
<line x1="1220.3" y1="678.05" x2="1377" y2="678.05" stroke="#6b6b6b" stroke-width="1.5" />
<line x1="1221.05" y1="677.3" x2="1221.05" y2="706" stroke="#6b6b6b" stroke-width="1.5" />
<line x1="1220.3" y1="705.5" x2="1377" y2="705.5" stroke="#fafafa" stroke-width="1" />
<line x1="1376.5" y1="677.3" x2="1376.5" y2="706" stroke="#fafafa" stroke-width="1" />
<text x="1223.3" y="695.8" font-size="15.5" fill="#808080" textLength="8.5" lengthAdjust="spacingAndGlyphs" >0</text>
<rect x="905.5" y="725" width="14" height="14" fill="#ffffff" />
<line x1="905.5" y1="725.5" x2="919.5" y2="725.5" stroke="#6b6b6b" stroke-width="1" />
<line x1="906.0" y1="725" x2="906.0" y2="739" stroke="#6b6b6b" stroke-width="1" />
<line x1="906.5" y1="726.5" x2="918.5" y2="726.5" stroke="#a0a0a0" stroke-width="1" />
<line x1="907.0" y1="726" x2="907.0" y2="738" stroke="#a0a0a0" stroke-width="1" />
<text x="927.7" y="738" font-size="15.5" fill="#000" textLength="241.3" lengthAdjust="spacingAndGlyphs" >Use Global Trade Position Limit:</text>
<rect x="1220.3" y="720.5" width="156.70000000000005" height="28.5" fill="#f0f0f0" />
<line x1="1220.3" y1="721.25" x2="1377" y2="721.25" stroke="#6b6b6b" stroke-width="1.5" />
<line x1="1221.05" y1="720.5" x2="1221.05" y2="749" stroke="#6b6b6b" stroke-width="1.5" />
<line x1="1220.3" y1="748.5" x2="1377" y2="748.5" stroke="#fafafa" stroke-width="1" />
<line x1="1376.5" y1="720.5" x2="1376.5" y2="749" stroke="#fafafa" stroke-width="1" />
<text x="1223.3" y="738.5" font-size="15.5" fill="#808080" textLength="8.5" lengthAdjust="spacingAndGlyphs" >0</text>
<rect x="485" y="682" width="100" height="35" fill="#f0f0f0" />
<line x1="485" y1="682.5" x2="585" y2="682.5" stroke="#ffffff" stroke-width="1" />
<line x1="485.5" y1="682" x2="485.5" y2="717" stroke="#ffffff" stroke-width="1" />
<line x1="485" y1="716" x2="585" y2="716" stroke="#696969" stroke-width="2" />
<line x1="584" y1="682" x2="584" y2="717" stroke="#696969" stroke-width="2" />
<text x="518" y="705" font-size="15.5" fill="#000" textLength="33.5" lengthAdjust="spacingAndGlyphs" >New</text>
<rect x="610" y="682" width="100" height="35" fill="#f0f0f0" />
<line x1="610" y1="682.5" x2="710" y2="682.5" stroke="#ffffff" stroke-width="1" />
<line x1="610.5" y1="682" x2="610.5" y2="717" stroke="#ffffff" stroke-width="1" />
<line x1="610" y1="716" x2="710" y2="716" stroke="#696969" stroke-width="2" />
<line x1="709" y1="682" x2="709" y2="717" stroke="#696969" stroke-width="2" />
<text x="624.3" y="705" font-size="15.5" fill="#000" textLength="70.5" lengthAdjust="spacingAndGlyphs" >Duplicate</text>
<rect x="725" y="682" width="100" height="35" fill="#f0f0f0" />
<line x1="725" y1="682.5" x2="825" y2="682.5" stroke="#ffffff" stroke-width="1" />
<line x1="725.5" y1="682" x2="725.5" y2="717" stroke="#ffffff" stroke-width="1" />
<line x1="725" y1="716" x2="825" y2="716" stroke="#696969" stroke-width="2" />
<line x1="824" y1="682" x2="824" y2="717" stroke="#696969" stroke-width="2" />
<text x="744.3" y="705" font-size="15.5" fill="#000" textLength="60.1" lengthAdjust="spacingAndGlyphs" >Remove</text>
<rect x="485.5" y="737" width="14" height="14" fill="#ffffff" />
<line x1="485.5" y1="737.5" x2="499.5" y2="737.5" stroke="#6b6b6b" stroke-width="1" />
<line x1="486.0" y1="737" x2="486.0" y2="751" stroke="#6b6b6b" stroke-width="1" />
<line x1="486.5" y1="738.5" x2="498.5" y2="738.5" stroke="#a0a0a0" stroke-width="1" />
<line x1="487.0" y1="738" x2="487.0" y2="750" stroke="#a0a0a0" stroke-width="1" />
<text x="507" y="750" font-size="15.5" fill="#000" textLength="355" lengthAdjust="spacingAndGlyphs" >Apply Intraday Session Times To Intraday Chart</text>
<rect x="485.5" y="761.5" width="14" height="14" fill="#ffffff" />
<line x1="485.5" y1="762.0" x2="499.5" y2="762.0" stroke="#6b6b6b" stroke-width="1" />
<line x1="486.0" y1="761.5" x2="486.0" y2="775.5" stroke="#6b6b6b" stroke-width="1" />
<line x1="486.5" y1="763.0" x2="498.5" y2="763.0" stroke="#a0a0a0" stroke-width="1" />
<line x1="487.0" y1="762.5" x2="487.0" y2="774.5" stroke="#a0a0a0" stroke-width="1" />
<path d="M489.0 768.5 L491.5 771.5 L496.5 765.0" fill="none" stroke="#000" stroke-width="1.9"/>
<text x="507" y="774.5" font-size="15.5" fill="#000" textLength="556.3" lengthAdjust="spacingAndGlyphs" >Overwrite Existing Settings When Automatically Updating From The Server</text>
<rect x="485" y="800" width="125" height="34.5" fill="#f0f0f0" />
<line x1="485" y1="800.5" x2="610" y2="800.5" stroke="#ffffff" stroke-width="1" />
<line x1="485.5" y1="800" x2="485.5" y2="834.5" stroke="#ffffff" stroke-width="1" />
<line x1="485" y1="833.5" x2="610" y2="833.5" stroke="#696969" stroke-width="2" />
<line x1="609" y1="800" x2="609" y2="834.5" stroke="#696969" stroke-width="2" />
<rect x="485" y="800" width="125" height="34.5" fill="none" stroke="#303030" stroke-width="1.6" />
<text x="535.3" y="823" font-size="15.5" fill="#000" textLength="23.5" lengthAdjust="spacingAndGlyphs" >OK</text>
<rect x="651.8" y="800" width="124.70000000000005" height="34.5" fill="#f0f0f0" />
<line x1="651.8" y1="800.5" x2="776.5" y2="800.5" stroke="#ffffff" stroke-width="1" />
<line x1="652.3" y1="800" x2="652.3" y2="834.5" stroke="#ffffff" stroke-width="1" />
<line x1="651.8" y1="833.5" x2="776.5" y2="833.5" stroke="#696969" stroke-width="2" />
<line x1="775.5" y1="800" x2="775.5" y2="834.5" stroke="#696969" stroke-width="2" />
<text x="688" y="823" font-size="15.5" fill="#000" textLength="51" lengthAdjust="spacingAndGlyphs" >Cancel</text>
<rect x="890.5" y="810" width="14" height="14" fill="#ffffff" />
<line x1="890.5" y1="810.5" x2="904.5" y2="810.5" stroke="#6b6b6b" stroke-width="1" />
<line x1="891.0" y1="810" x2="891.0" y2="824" stroke="#6b6b6b" stroke-width="1" />
<line x1="891.5" y1="811.5" x2="903.5" y2="811.5" stroke="#a0a0a0" stroke-width="1" />
<line x1="892.0" y1="811" x2="892.0" y2="823" stroke="#a0a0a0" stroke-width="1" />
<path d="M894.0 817 L896.5 820 L901.5 813.5" fill="none" stroke="#000" stroke-width="1.9"/>
<text x="912.2" y="823.3" font-size="15.5" fill="#000" textLength="446.1" lengthAdjust="spacingAndGlyphs" >Use These Symbol Settings in New Instances When Started</text>
</svg></body></html>
